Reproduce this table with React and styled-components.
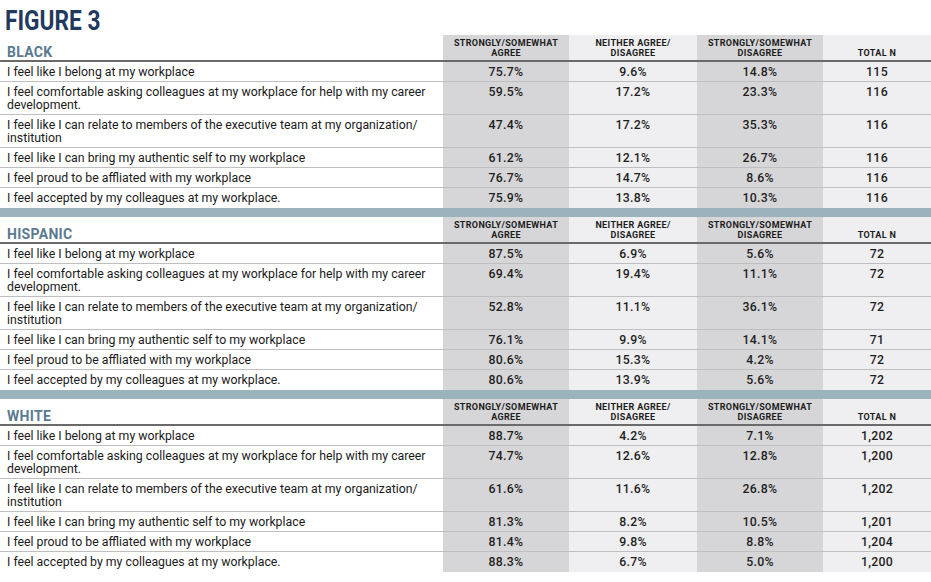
import React from "react";
import styled, { createGlobalStyle } from "styled-components";

const Global = createGlobalStyle`
  html, body { margin: 0; padding: 0; background: #ffffff; }
  body { font-family: Roboto, "Liberation Sans", sans-serif; color: #1a1a1a; }
`;

const COLS = "443px 126px 128px 126px 108px";
const DARK = "#d6d6d8";
const LIGHT = "#efeff1";

const Page = styled.div`
  width: 931px;
  background: #fff;
`;

const TitleBar = styled.div`
  height: 35px;
  display: flex;
  align-items: flex-end;
  padding-left: 5px;
  box-sizing: border-box;
`;

const FigureTitle = styled.h1`
  margin: 0;
  font-family: Roboto, "Liberation Sans", sans-serif;
  font-weight: 700;
  font-size: 27px;
  line-height: 27px;
  color: #1f3a5e;
  transform: scaleX(0.84);
  transform-origin: left bottom;
  white-space: nowrap;
`;

const Section = styled.section`
  display: flex;
  flex-direction: column;
`;

const HeaderRow = styled.div`
  display: grid;
  grid-template-columns: ${COLS};
  height: 27px;
  box-sizing: border-box;
  border-bottom: 2px solid #6a6a6a;
`;

const GroupTitle = styled.div`
  display: flex;
  align-items: flex-end;
  padding: 0 0 1px 7px;
  font-weight: 700;
  font-size: 14px;
  line-height: 14px;
  letter-spacing: 0.3px;
  color: #5b7a91;
`;

const ColHead = styled.div`
  background: ${(p) => (p.$dark ? DARK : LIGHT)};
  display: flex;
  flex-direction: column;
  justify-content: flex-end;
  align-items: center;
  padding-bottom: 2px;
  font-weight: 700;
  font-size: 9px;
  line-height: 10px;
  letter-spacing: 0.35px;
  color: #1c1c1c;
  text-align: center;
  text-transform: uppercase;
`;

const Row = styled.div`
  display: grid;
  grid-template-columns: ${COLS};
  height: ${(p) => (p.$tall ? 33 : 20)}px;
  box-sizing: border-box;
  border-bottom: ${(p) => (p.$last ? "none" : "1px solid #bfbfc1")};
`;

const Label = styled.div`
  padding: 3.5px 0 0 7px;
  font-size: 12.3px;
  line-height: 13px;
  color: #1a1a1a;
`;

const Value = styled.div`
  background: ${(p) => (p.$dark ? DARK : LIGHT)};
  padding-top: 4px;
  text-align: center;
  font-weight: 500;
  font-size: 12.3px;
  line-height: 12px;
  letter-spacing: 0.3px;
  color: #1e1e1e;
`;

const Divider = styled.div`
  height: 9px;
  background: #9bb3bd;
`;

const LABELS = [
  ["I feel like I belong at my workplace"],
  ["I feel comfortable asking colleagues at my workplace for help with my career", "development."],
  ["I feel like I can relate to members of the executive team at my organization/", "institution"],
  ["I feel like I can bring my authentic self to my workplace"],
  ["I feel proud to be affliated with my workplace"],
  ["I feel accepted by my colleagues at my workplace."],
];

const GROUPS = [
  {
    name: "BLACK",
    rows: [
      ["75.7%", "9.6%", "14.8%", "115"],
      ["59.5%", "17.2%", "23.3%", "116"],
      ["47.4%", "17.2%", "35.3%", "116"],
      ["61.2%", "12.1%", "26.7%", "116"],
      ["76.7%", "14.7%", "8.6%", "116"],
      ["75.9%", "13.8%", "10.3%", "116"],
    ],
  },
  {
    name: "HISPANIC",
    rows: [
      ["87.5%", "6.9%", "5.6%", "72"],
      ["69.4%", "19.4%", "11.1%", "72"],
      ["52.8%", "11.1%", "36.1%", "72"],
      ["76.1%", "9.9%", "14.1%", "71"],
      ["80.6%", "15.3%", "4.2%", "72"],
      ["80.6%", "13.9%", "5.6%", "72"],
    ],
  },
  {
    name: "WHITE",
    rows: [
      ["88.7%", "4.2%", "7.1%", "1,202"],
      ["74.7%", "12.6%", "12.8%", "1,200"],
      ["61.6%", "11.6%", "26.8%", "1,202"],
      ["81.3%", "8.2%", "10.5%", "1,201"],
      ["81.4%", "9.8%", "8.8%", "1,204"],
      ["88.3%", "6.7%", "5.0%", "1,200"],
    ],
  },
];

const HEADS = [
  ["Strongly/Somewhat", "Agree"],
  ["Neither Agree/", "Disagree"],
  ["Strongly/Somewhat", "Disagree"],
  ["Total N"],
];

function Group({ group, isLast }) {
  return (
    <Section>
      <HeaderRow>
        <GroupTitle>{group.name}</GroupTitle>
        {HEADS.map((h, i) => (
          <ColHead key={i} $dark={i % 2 === 0}>
            {h.map((line, j) => (
              <span key={j}>{line}</span>
            ))}
          </ColHead>
        ))}
      </HeaderRow>
      {group.rows.map((vals, r) => {
        const label = LABELS[r];
        return (
          <Row key={r} $tall={label.length > 1} $last={r === group.rows.length - 1}>
            <Label>
              {label.map((l, k) => (
                <React.Fragment key={k}>
                  {k > 0 && <br />}
                  {l}
                </React.Fragment>
              ))}
            </Label>
            {vals.map((v, c) => (
              <Value key={c} $dark={c % 2 === 0}>
                {v}
              </Value>
            ))}
          </Row>
        );
      })}
      {!isLast && <Divider />}
    </Section>
  );
}

export default function App() {
  return (
    <Page>
      <Global />
      <TitleBar>
        <FigureTitle>FIGURE 3</FigureTitle>
      </TitleBar>
      {GROUPS.map((g, i) => (
        <Group key={g.name} group={g} isLast={i === GROUPS.length - 1} />
      ))}
    </Page>
  );
}
